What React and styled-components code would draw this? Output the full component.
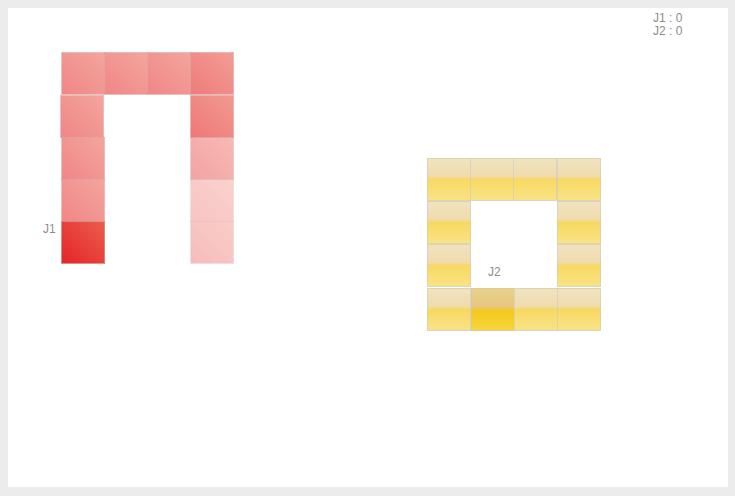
import styled, { createGlobalStyle, css } from "styled-components";

const GlobalStyle = createGlobalStyle`
  html, body {
    margin: 0;
    padding: 0;
    background: #ececec;
  }
  body {
    padding: 8px;
    font-family: "Liberation Sans", Arial, sans-serif;
  }
`;

const Board = styled.div`
  position: relative;
  width: 720px;
  height: 479px;
  background: #ffffff;
  overflow: hidden;
`;

const Score = styled.div`
  position: absolute;
  top: 4px;
  left: 645px;
  display: flex;
  flex-direction: column;
  font-size: 12px;
  line-height: 13px;
  color: #8c8c8c;
`;

const redCell = css`
  background: linear-gradient(45deg, #e52527 0%, #ec5c4c 100%);
`;

const yellowCell = css`
  background: linear-gradient(
    to bottom,
    #f1e3c0 0%,
    #efdcae 42%,
    #f7d862 50%,
    #f9e385 100%
  );
`;

const yellowHead = css`
  background: linear-gradient(
    to bottom,
    #e9d08e 0%,
    #e6c67a 45%,
    #f3ca1c 52%,
    #f6d43a 100%
  );
`;

// snake segments sit on the game canvas at their grid coordinates
const Cell = styled.div.attrs(({ $x, $y, $o = 1 }) => ({
  style: { left: $x, top: $y, opacity: $o },
}))`
  position: absolute;
  box-sizing: border-box;
  width: 44px;
  height: 43px;
  border: 1px solid rgba(200, 200, 200, 0.55);
  ${({ $kind }) =>
    $kind === "red" ? redCell : $kind === "yellowHead" ? yellowHead : yellowCell}
`;

const PlayerLabel = styled.span`
  position: absolute;
  left: ${({ $x }) => $x}px;
  top: ${({ $y }) => $y}px;
  font-size: 12px;
  line-height: 12px;
  color: #8e8e8e;
`;

// [x, y, opacity]
const red = [
  [53, 213, 1],
  [53, 171, 0.55],
  [53, 129, 0.55],
  [52, 87, 0.55],
  [53, 44, 0.55],
  [96, 44, 0.55],
  [139, 44, 0.55],
  [182, 44, 0.6],
  [182, 87, 0.62],
  [182, 129, 0.42],
  [182, 171, 0.27],
  [182, 213, 0.3],
];

const yellow = [
  [463, 280, "yellowHead"],
  [419, 280],
  [419, 236],
  [419, 193],
  [419, 150],
  [462, 150],
  [505, 150],
  [549, 150],
  [549, 193],
  [549, 236],
  [549, 280],
  [506, 280],
];

export default function App() {
  return (
    <>
      <GlobalStyle />
      <Board>
        {red.map(([x, y, o], i) => (
          <Cell key={"r" + i} $kind="red" $x={x} $y={y} $o={o} />
        ))}
        {yellow.map(([x, y, k], i) => (
          <Cell key={"y" + i} $kind={k || "yellow"} $x={x} $y={y} />
        ))}
        <PlayerLabel $x={35} $y={215}>J1</PlayerLabel>
        <PlayerLabel $x={480} $y={258}>J2</PlayerLabel>
        <Score>
          <span>J1 : 0</span>
          <span>J2 : 0</span>
        </Score>
      </Board>
    </>
  );
}
